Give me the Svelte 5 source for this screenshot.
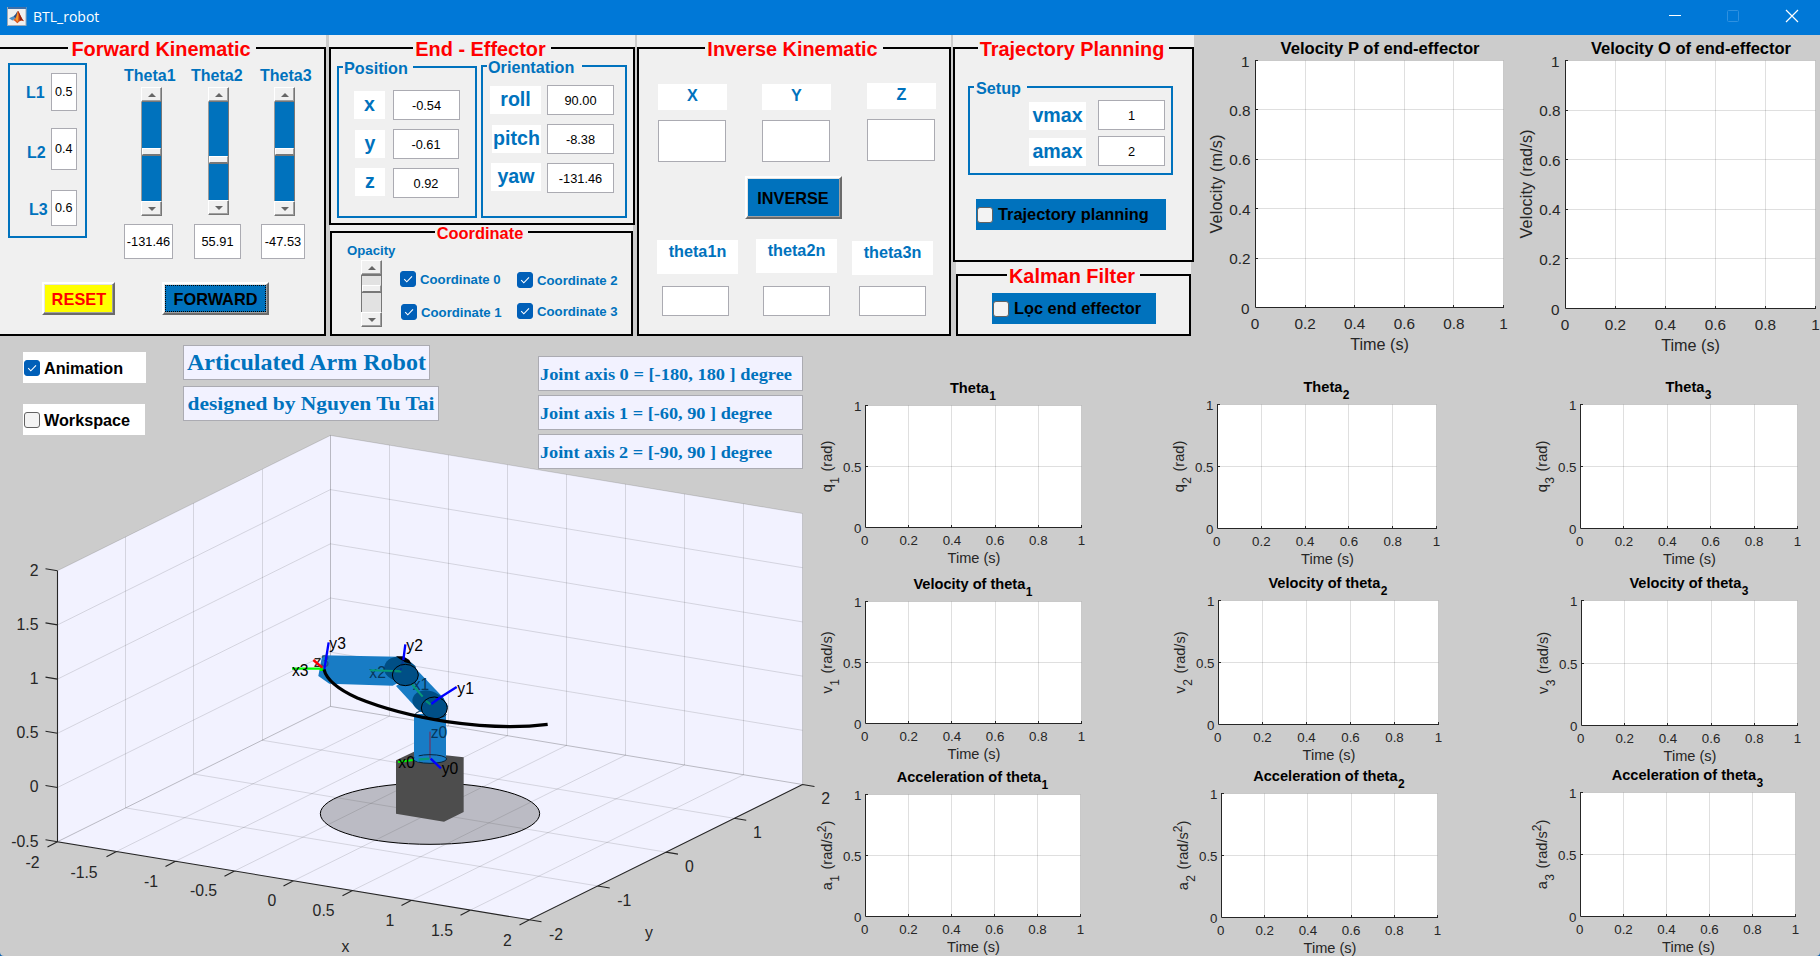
<script>
  const links = [
    { name: 'L1', value: '0.5', gap: 8, h: 38, indent: 16, drop: 1 },
    { name: 'L2', value: '0.4', gap: 17, h: 42, indent: 17, drop: 7 },
    { name: 'L3', value: '0.6', gap: 20, h: 36, indent: 19, drop: 4 }
  ];
  const thetas = [
    { name: 'Theta1', value: '-131.46', col: 67, h: 129, thumb: 46, indent: 6, w: 49, label: 7 },
    { name: 'Theta2', value: '55.91', col: 66, h: 128, thumb: 54, indent: 9, w: 47, label: 7 },
    { name: 'Theta3', value: '-47.53', col: 67, h: 129, thumb: 46, indent: 10, w: 44, label: 10 }
  ];
  const position = [
    { name: 'x', value: '-0.54', gap: 17, indent: 15, w: 31, drop: 1, iw: 67, space: 8 },
    { name: 'y', value: '-0.61', gap: 9, indent: 16, w: 30, drop: 1, iw: 66, space: 8 },
    { name: 'z', value: '0.92', gap: 9, indent: 16, w: 30, drop: 0, iw: 66, space: 8 }
  ];
  const orientation = [
    { name: 'roll', value: '90.00', gap: 14, indent: 7, w: 51, drop: 1, iw: 67, space: 6 },
    { name: 'pitch', value: '-8.38', gap: 9, indent: 9, w: 49, drop: 1, iw: 67, space: 6 },
    { name: 'yaw', value: '-131.46', gap: 9, indent: 8, w: 50, drop: 0, iw: 67, space: 6 }
  ];
  const limits = [
    { name: 'vmax', value: '1', gap: 5, indent: 59, w: 57, drop: 2, iw: 67, space: 12 },
    { name: 'amax', value: '2', gap: 6, indent: 59, w: 57, drop: 2, iw: 67, space: 12 }
  ];
  const targets = [
    { name: 'X', indent: 19, drop: 1 },
    { name: 'Y', indent: 35, drop: 1 },
    { name: 'Z', indent: 36, drop: 0 }
  ];
  const solutions = [
    { name: 'theta1n', indent: 18, drop: 1, shift: 5, gap: 12 },
    { name: 'theta2n', indent: 18, drop: 0, shift: 7, gap: 13 },
    { name: 'theta3n', indent: 15, drop: 2, shift: 7, gap: 11 }
  ];
  const joints = [
    { text: 'Joint axis 0 = [-180, 180 ] degree', w: 252 },
    { text: 'Joint axis 1 = [-60, 90 ] degree', w: 232 },
    { text: 'Joint axis 2 = [-90, 90 ] degree', w: 232 }
  ];

  const big = [
    { cell: [1194, 35, 316, 301], x0: 1255.5, x1: 1503.5, y0: 60.5, y1: 307.5, title: 'Velocity P of end-effector', tw: 199, ylab: 'Velocity (m/s)', yw: 99 },
    { cell: [1510, 35, 310, 301], x0: 1565.5, x1: 1815.5, y0: 60.5, y1: 308.5, title: 'Velocity O of end-effector', tw: 200, ylab: 'Velocity (rad/s)', yw: 109 }
  ];
  const small = [
    { cell: [815, 336, 355, 234], x0: 865.5, x1: 1081.5, y0: 405.5, y1: 527.5, title: 'Theta', n: 1, q: 'q', unit: 'rad' },
    { cell: [1170, 336, 360, 234], x0: 1217.5, x1: 1436.5, y0: 404.5, y1: 528.5, title: 'Theta', n: 2, q: 'q', unit: 'rad' },
    { cell: [1530, 336, 290, 234], x0: 1580.5, x1: 1797.5, y0: 404.5, y1: 528.5, title: 'Theta', n: 3, q: 'q', unit: 'rad' },
    { cell: [815, 570, 355, 196], x0: 865.5, x1: 1081.5, y0: 601.5, y1: 723.5, title: 'Velocity of theta', n: 1, q: 'v', unit: 'rad/s' },
    { cell: [1170, 570, 360, 196], x0: 1218.5, x1: 1438.5, y0: 600.5, y1: 724.5, title: 'Velocity of theta', n: 2, q: 'v', unit: 'rad/s' },
    { cell: [1530, 570, 290, 196], x0: 1581.5, x1: 1797.5, y0: 600.5, y1: 725.5, title: 'Velocity of theta', n: 3, q: 'v', unit: 'rad/s' },
    { cell: [815, 766, 355, 190], x0: 865.5, x1: 1080.5, y0: 794.5, y1: 916.5, title: 'Acceleration of theta', n: 1, q: 'a', unit: 'rad/s', pow: '2' },
    { cell: [1170, 766, 360, 190], x0: 1221.5, x1: 1437.5, y0: 793.5, y1: 917.5, title: 'Acceleration of theta', n: 2, q: 'a', unit: 'rad/s', pow: '2' },
    { cell: [1530, 766, 290, 190], x0: 1580.5, x1: 1795.5, y0: 792.5, y1: 916.5, title: 'Acceleration of theta', n: 3, q: 'a', unit: 'rad/s', pow: '2' }
  ];
  const fifths = [0, 0.2, 0.4, 0.6, 0.8, 1];
  const halves = [0, 0.5, 1];
  const snap = (v) => Math.floor(v) + 0.5;

  // Corners of the 3D axes box: left, back, right and front on the floor.
  const L = [57.5, 841.7], B = [330.4, 706.4], R = [802.5, 784.5], F = [529.5, 919.8];
  const H = 271;
  const mix = (a, b, t) => [a[0] + (b[0] - a[0]) * t, a[1] + (b[1] - a[1]) * t];
  const seg = (a, b) => `M${a[0]} ${a[1]}L${b[0]} ${b[1]}`;
  const up = (p, k) => [p[0], p[1] - H * k];
  const wall = [];
  for (let i = 1; i < 5; i++) wall.push(seg(up(L, i / 5), up(B, i / 5)), seg(up(B, i / 5), up(R, i / 5)));
  for (let i = 1; i < 4; i++) {
    const p = mix(L, B, i / 4);
    wall.push(seg([snap(p[0]), p[1]], [snap(p[0]), p[1] - H]), seg(p, mix(F, R, i / 4)));
  }
  for (let i = 1; i < 8; i++) {
    const p = mix(B, R, i / 8);
    wall.push(seg([snap(p[0]), p[1]], [snap(p[0]), p[1] - H]), seg(p, mix(L, F, i / 8)));
  }
  wall.push(seg(up(L, 1), up(B, 1)), seg(up(B, 1), up(R, 1)), seg(R, up(R, 1)));
  const ticks = [];
  for (let i = 0; i <= 8; i++) { const p = mix(L, F, i / 8); ticks.push(seg(p, [p[0] - 10, p[1] + 5.2])); }
  for (let i = 0; i <= 4; i++) { const p = mix(F, R, i / 4); ticks.push(seg(p, [p[0] + 12, p[1] + 2])); }
  for (let i = 0; i <= 5; i++) { const p = up(L, i / 5); ticks.push(seg(p, [p[0] - 12, p[1] - 2])); }
  const zLabels = ['-0.5', '0', '0.5', '1', '1.5', '2'];
  const floorLabels = [
    ['-2', 32.5, 867.5], ['-1.5', 84, 877.5], ['-1', 151, 887], ['-0.5', 203.5, 896], ['0', 271.8, 906],
    ['0.5', 323.6, 916], ['1', 390, 926], ['1.5', 442, 936], ['2', 507.5, 945.5], ['x', 345.4, 951.5],
    ['-2', 556, 940], ['-1', 624.3, 906.3], ['0', 689.5, 872], ['1', 757.5, 838], ['2', 825.6, 804], ['y', 649, 937.5]
  ];
</script>

{#snippet slider(h, thumb, tone)}
  <div class="slider {tone}" style="height:{h}px">
    <div class="arrow"><svg width="8" height="4" viewBox="0 0 8 4"><path d="M0 4L4 0L8 4Z" fill="#666" /></svg></div>
    <div class="track"><div class="thumb" style="margin-top:{thumb}px"></div></div>
    <div class="arrow"><svg width="8" height="4" viewBox="0 0 8 4"><path d="M0 0L4 4L8 0Z" fill="#666" /></svg></div>
  </div>
{/snippet}

{#snippet box(on)}
  <span class="cb" class:on>
    {#if on}<svg width="14" height="14" viewBox="0 0 14 14"><path d="M3.2 7.2L5.8 9.8L11 4.4" fill="none" stroke="#fff" stroke-width="1.1" /></svg>{/if}
  </span>
{/snippet}

{#snippet fields(rows)}
  {#each rows as r}
    <div class="field" style="margin-top:{r.gap}px">
      <span class="tag" style="margin-left:{r.indent}px;margin-top:{r.drop}px;width:{r.w}px">{r.name}</span>
      <input value={r.value} style="margin-left:{r.space}px;width:{r.iw}px" />
    </div>
  {/each}
{/snippet}

{#snippet plotArea(c, ysteps)}
  {@const w = c.x1 - c.x0}
  {@const h = c.y1 - c.y0}
  <rect x={c.x0} y={c.y0} width={w} height={h} fill="#fff" />
  {#each fifths.slice(1) as t}<path d="M{snap(c.x0 + w * t)} {c.y0}V{c.y1}" class="grid" />{/each}
  {#each ysteps.slice(1) as t}<path d="M{c.x0} {snap(c.y1 - h * t)}H{c.x1}" class="grid" />{/each}
  <path d="M{c.x0} {c.y0 - 0.5}V{c.y1}H{c.x1 + 0.5}" class="axis" />
  {#each fifths.slice(1) as t}<path d="M{snap(c.x0 + w * t)} {c.y1}v-2.5" class="axis" />{/each}
  {#each ysteps.slice(1) as t}<path d="M{c.x0} {snap(c.y1 - h * t)}h2.5" class="axis" />{/each}
{/snippet}

<div class="window">
  <header>
    <svg class="logo" width="20" height="20" viewBox="0 0 20 20">
      <rect x="0.5" y="0.5" width="18.5" height="18" fill="#efefef" stroke="#9aa7b5" />
      <rect x="1" y="0" width="18" height="2" fill="#3f6fa8" />
      <path d="M2 11.2L6.4 9.3L8.2 11.4L5.4 13.4Z" fill="#4a8fc7" />
      <path d="M6.4 9.3C8.3 8.6 9.3 5.4 10.8 4L9.8 10L8.2 11.4Z" fill="#274f86" />
      <path d="M5.4 13.4L8.2 11.4C9.4 10 9.7 6 10.8 4C12 3.8 13.6 10.5 17 14.2C14.5 12.8 13 13.3 10.6 16.2C9.6 16.6 8.4 13 5.4 13.4Z" fill="#d9541e" />
      <path d="M10.8 4C12 3.8 13.6 10.5 17 14.2C14.8 13 13.7 12.8 12.6 13.8C12.8 10 12 6 10.8 4Z" fill="#8f1f12" />
      <path d="M9.6 9.5C10.3 8 10.5 6 10.8 5C11.4 8 11.6 11 10.6 15C10 14 9.4 13 8.4 12.4Z" fill="#f39b2d" />
    </svg>
    <span class="caption">BTL_robot</span>
    <svg class="winbtns" width="140" height="35" viewBox="1665 0 140 35" fill="none">
      <path d="M1669 15.5H1681" stroke="#fff" />
      <rect x="1727.5" y="10.5" width="11" height="11" rx="1" stroke="#2f91e0" />
      <path d="M1786 10L1798 22M1798 10L1786 22" stroke="#fff" stroke-width="1.2" />
    </svg>
  </header>

  <section class="top">
    <div class="panel forward">
      <fieldset>
        <legend>Forward Kinematic</legend>
        <div class="row upper">
          <div class="lbox">
            {#each links as l}
              <div class="link" style="margin-top:{l.gap}px;height:{l.h}px">
                <span style="padding-left:{l.indent}px;padding-top:{l.drop}px">{l.name}</span>
                <input value={l.value} />
              </div>
            {/each}
          </div>
          <div class="thetas">
            {#each thetas as t}
              <div class="theta" style="width:{t.col}px">
                <span class="thlabel" style="margin-left:{t.label - 1}px">{t.name}</span>
                <div class="thslide">{@render slider(t.h, t.thumb, 'blue')}</div>
                <input value={t.value} style="margin-left:{t.indent}px;width:{t.w}px" />
              </div>
            {/each}
          </div>
        </div>
        <div class="row actions">
          <button class="reset">RESET</button>
          <button class="go focus">FORWARD</button>
        </div>
      </fieldset>
    </div>

    <div class="col second">
      <div class="panel effector">
        <fieldset>
          <legend>End - Effector</legend>
          <div class="row">
            <fieldset class="sub pos"><legend>Position</legend>{@render fields(position)}</fieldset>
            <fieldset class="sub ori"><legend>Orientation</legend>{@render fields(orientation)}</fieldset>
          </div>
        </fieldset>
      </div>
      <div class="panel coord">
        <fieldset>
          <legend>Coordinate</legend>
          <div class="row">
            <div class="opacity">
              <span>Opacity</span>
              {@render slider(67, 9, 'plain')}
            </div>
            <div class="checks a">
              <label>{@render box(true)}Coordinate 0</label>
              <label>{@render box(true)}Coordinate 1</label>
            </div>
            <div class="checks b">
              <label>{@render box(true)}Coordinate 2</label>
              <label>{@render box(true)}Coordinate 3</label>
            </div>
          </div>
        </fieldset>
      </div>
    </div>

    <div class="panel inverse">
      <fieldset>
        <legend>Inverse Kinematic</legend>
        <div class="row targets">
          {#each targets as t}
            <div class="target" style="margin-left:{t.indent}px;padding-top:{t.drop}px">
              <span class="tag16">{t.name}</span>
              <input />
            </div>
          {/each}
        </div>
        <button class="go inv">INVERSE</button>
        <div class="row solutions">
          {#each solutions as s}
            <div class="solution" style="margin-left:{s.indent}px;padding-top:{s.drop}px">
              <span class="tag16">{s.name}</span>
              <input style="margin-left:{s.shift}px;margin-top:{s.gap}px" />
            </div>
          {/each}
        </div>
      </fieldset>
    </div>

    <div class="col third">
      <div class="panel traj">
        <fieldset>
          <legend>Trajectory Planning</legend>
          <fieldset class="sub setup"><legend>Setup</legend>{@render fields(limits)}</fieldset>
          <label class="strip plan">{@render box(false)}Trajectory planning</label>
        </fieldset>
      </div>
      <div class="panel kalman">
        <fieldset>
          <legend>Kalman Filter</legend>
          <label class="strip filter">{@render box(false)}Lọc end effector</label>
        </fieldset>
      </div>
    </div>

    {#each big as c}
      {@const w = c.x1 - c.x0}
      {@const h = c.y1 - c.y0}
      {@const mid = c.x0 + w / 2}
      <svg class="plot" width={c.cell[2]} height={c.cell[3]} viewBox={c.cell.join(' ')}>
        {@render plotArea(c, fifths)}
        <text x={mid + 0.5} y="54.3" class="title" font-size="16" textLength={c.tw} lengthAdjust="spacingAndGlyphs">{c.title}</text>
        {#each fifths as t}
          <text x={c.x0 + w * t - (t === 0 ? 0.5 : 0)} y={c.y1 + 21.7} class="mid" font-size="15.3">{t}</text>
          <text x={c.x0 - (t === 0 || t === 1 ? 6 : 5)} y={c.y1 - h * t + 6} class="end" font-size="15.3">{t}</text>
        {/each}
        <text x={mid} y={c.y1 + 42.7} class="mid" font-size="16.2">Time (s)</text>
        <text transform="translate({c.x0 - 33.7} 184) rotate(-90)" class="mid" font-size="16.2" textLength={c.yw}>{c.ylab}</text>
      </svg>
    {/each}
  </section>

  <section class="bottom">
    <div class="scene">
      <div class="row heading">
        <div class="col toggles">
          <label class="white w1">{@render box(true)}Animation</label>
          <label class="white w2">{@render box(false)}Workspace</label>
        </div>
        <div class="col names">
          <div class="note n1"><svg width="245" height="33"><text x="3" y="24.3" font-size="22.5" textLength="239" lengthAdjust="spacingAndGlyphs">Articulated Arm Robot</text></svg></div>
          <div class="note n2"><svg width="254" height="33"><text x="3.5" y="23" font-size="19" textLength="247" lengthAdjust="spacingAndGlyphs">designed by Nguyen Tu Tai</text></svg></div>
        </div>
        <div class="col joints">
          {#each joints as j}
            <div class="note"><svg width="263" height="33"><text x="1" y="23.3" font-size="16.4" textLength={j.w} lengthAdjust="spacingAndGlyphs">{j.text}</text></svg></div>
          {/each}
        </div>
      </div>

      <svg class="axes3d" width="815" height="526" viewBox="0 430 815 526">
        <path d="M{L}L{up(L, 1)}L{up(B, 1)}L{up(R, 1)}L{R}L{F}Z" fill="#f2f2ff" />
        <path d={wall.join('')} fill="none" stroke="#262626" stroke-opacity="0.15" />
        <path d="{seg(L, B)}{seg(B, R)}M330.5 706.4V435.4" fill="none" stroke="#262626" stroke-opacity="0.28" />
        <path d="M{up(L, 1)}L{L}L{F}L{R}{ticks.join('')}" fill="none" stroke="#262626" stroke-width="1.1" />
        {#each zLabels as z, i}<text x="38.5" y={846.5 - i * 54.2} class="end" font-size="15.8">{z}</text>{/each}
        {#each floorLabels as [t, x, y]}<text {x} {y} class="mid" font-size="15.8">{t}</text>{/each}

        <g transform="translate(270 600) scale(0.33333)">
          <ellipse cx="480" cy="641" rx="329" ry="92" fill="#4d4d4d" fill-opacity="0.33" stroke="#000" stroke-width="3" />
          <path d="M378 481L432 455L581 472V636L522 665L378 641Z" fill="#4d4d4d" />
          <path d="M432 342H528V477A48 13 0 0 1 432 477Z" fill="#187cc5" />
          <g class="hidden">
            <text x="482" y="415">z0</text>
          </g>
          <path d="M480 395V476" stroke="#4c5088" stroke-width="6" />
          <path d="M430 480L478 476" stroke="#079a78" stroke-width="7" />
          <ellipse cx="480" cy="477" rx="50" ry="13" fill="none" stroke="#04243c" stroke-width="3" />
          <ellipse cx="482" cy="343" rx="46" ry="13" fill="none" stroke="#04243c" stroke-width="3" />
          <path d="M157 166L384 170L446 215L368 257L178 251L145 228L152 190Z" fill="#187cc5" />
          <path d="M446 215L520 293L535 320L450 336L378 258Z" fill="#187cc5" />
          <path d="M342 204C345 182 362 171 382 170C402 171 420 183 436 198L444 222L372 240C352 232 342 220 342 204Z" fill="#004f86" />
          <path d="M427 300C430 282 446 271 468 271C485 271 505 282 520 294L530 320L458 336C438 328 427 316 427 300Z" fill="#004f86" />
          <path d="M378 169H400L418 180L424 192L405 187L388 176Z" fill="#000" />
          <g class="hidden">
            <text x="298" y="233">x2</text>
            <text x="428" y="270">x1</text>
          </g>
          <path d="M300 211L394 214M425 252L458 290" stroke="#079a78" stroke-width="6" />
          <path d="M399 182L392 211" stroke="#05358f" stroke-width="6" />
          <ellipse cx="406" cy="225" rx="39" ry="32" fill="#004f86" stroke="#000" stroke-width="3" />
          <ellipse cx="493" cy="324" rx="39" ry="33" fill="#004f86" stroke="#000" stroke-width="3" />
          <path d="M374 213L394 214M468 303L482 313" stroke="#058d72" stroke-width="7" />
          <path d="M393 204L392 212" stroke="#05358f" stroke-width="5" />
          <text x="131" y="200" fill="#111">z</text><text x="152" y="200" fill="#0b3f6b" fill-opacity="0.45">3</text>
          <path d="M384 486L430 480M66 206H160" stroke="#0f0" stroke-width="6.5" />
          <path d="M150 208H162" stroke="#0f0" stroke-width="10" />
          <path d="M130 180L157 203" stroke="#f00" stroke-width="7.5" />
          <path d="M163 208L176 127M406 133L400 180M484 312L508 294M508 294L560 261M482 476L513 505" stroke="#00f" stroke-width="7" fill="none" />
          <path d="M162 208C170 242 205 268 262 294C345 328 430 349 530 365C640 381 740 385 833 373" fill="none" stroke="#000" stroke-width="9.5" />
          <g class="tips">
            <text x="178" y="146">y3</text>
            <text x="409" y="152">y2</text>
            <text x="562" y="282">y1</text>
            <text x="515" y="523">y0</text>
            <text x="66" y="228">x3</text>
            <text x="385" y="505">x0</text>
          </g>
          <path d="M433 462V480L446 487V462Z" fill="#187cc5" />
        </g>
      </svg>
    </div>

    <div class="plots">
      {#each small as c}
        {@const w = c.x1 - c.x0}
        {@const h = c.y1 - c.y0}
        {@const mid = c.x0 + w / 2}
        <svg class="plot" width={c.cell[2]} height={c.cell[3]} viewBox={c.cell.join(' ')}>
          {@render plotArea(c, halves)}
          <text x={mid - 0.5} y={c.y0 - 12.5} class="title" font-size="14.6">{c.title}<tspan dy="7" dx="0.5" font-size="12">{c.n}</tspan></text>
          {#each fifths as t}<text x={c.x0 + w * t - (t === 0 ? 0.7 : 0)} y={c.y1 + 17.2} class="mid" font-size="13.3">{t}</text>{/each}
          {#each halves as t}<text x={c.x0 - 4} y={c.y1 - h * t + 5.7} class="end" font-size="13.3">{t}</text>{/each}
          <text x={mid + 0.5} y={c.y1 + 35.7} class="mid" font-size="14.6">Time (s)</text>
          <text transform="translate({c.x0 - 33.5} {(c.y0 + c.y1) / 2}) rotate(-90)" class="mid" font-size="14.6">{c.q}<tspan dy="6.5" dx="0.5" font-size="12">{c.n}</tspan><tspan dy="-6.5" dx="5.5">({c.unit}</tspan>{#if c.pow}<tspan dy="-6" font-size="12">{c.pow}</tspan><tspan dy="6">)</tspan>{:else}<tspan>)</tspan>{/if}</text>
        </svg>
      {/each}
    </div>
  </section>
</div>

<style>
  :global(body) { margin: 0; background: #0b62b0; overflow: hidden; }
  :global(*) { box-sizing: border-box; }
  .window { width: 1820px; height: 956px; background: #ccc; overflow: hidden; display: flex; flex-direction: column; border-radius: 0 0 4px 4px; font-family: "Liberation Sans", Arial, sans-serif; }
  header { height: 35px; background: #0078d7; display: flex; align-items: flex-start; }
  .logo { margin: 7px 6px 0 7px; }
  .caption { color: #fff; font: 14px/34px "Open Sans", "Noto Sans", sans-serif; }
  .winbtns { margin-left: auto; margin-right: 15px; }

  .row { display: flex; align-items: flex-start; }
  .col { display: flex; flex-direction: column; align-items: flex-start; }
  .top { display: flex; align-items: flex-start; height: 301px; }
  .panel { background: #f0f0f0; flex: none; }
  fieldset { margin: 0; padding: 0; min-width: 0; border: 2px solid #000; height: 100%; }
  legend { margin: 0 auto; padding: 0 5px 0 2px; height: 26px; line-height: 28px; color: #f00; font-size: 19.9px; font-weight: bold; white-space: nowrap; }
  .forward legend { padding-left: 3px; }
  .sub { border-color: #0072bd; flex: none; }
  .panel .sub legend { color: #0072bd; font-size: 16.2px; margin: 0 0 0 4px; padding: 0 0 0 1px; }

  input { display: block; margin: 0; padding: 0; border: 1px solid #ababb2; border-radius: 0; background: #fff; color: #000; text-align: center; font: 12.8px "Liberation Sans", Arial, sans-serif; height: 30px; outline: 0; flex: none; }
  button { padding: 1px 0 0; font: bold 16.3px "Liberation Sans", Arial, sans-serif; border: 2px solid; border-color: #fff #6b6b6b #6b6b6b #fff; box-shadow: inset -1px -1px #a0a0a0, inset 1px 1px #e3e3e3; border-radius: 0; white-space: nowrap; }

  .forward { width: 326px; height: 301px; }
  .forward fieldset { border-left: 0; }
  .upper { height: 198px; }
  .lbox { width: 79px; height: 175px; margin: 2px 0 0 8px; border: 2px solid #0072bd; }
  .link { display: flex; align-items: center; }
  .link span { width: 41px; color: #0072bd; font-weight: bold; font-size: 16px; }
  .link input { width: 26px; height: 100%; text-align: left; padding-left: 3px; font-size: 12.6px; }
  .thetas { display: flex; margin-left: 31px; }
  .thlabel { display: block; height: 26px; line-height: 30px; font-size: 16px; font-weight: bold; color: #0072bd; }
  .thslide { height: 129px; margin-left: 23px; }
  .theta input { margin-top: 8px; height: 35px; }
  .actions { margin-top: 23px; }
  .reset { width: 73px; height: 33px; margin-left: 42px; padding-left: 1px; background: #ff0; color: #f00; letter-spacing: 0.1px; }
  .go { background: #0072bd; color: #000; }
  .focus { width: 107px; height: 33px; margin-left: 47px; outline: 1px dotted #000; outline-offset: -4px; }

  .slider { width: 21px; display: flex; flex-direction: column; }
  .arrow { height: 15px; background: #f0f0f0; border: 1px solid; border-color: #fff #777 #777 #fff; box-shadow: inset -1px -1px #a0a0a0; display: flex; align-items: center; justify-content: center; }
  .track { flex: 1; border-right: 1px solid #777; border-left: 1px solid #9b9b9b; overflow: hidden; }
  .blue .track { background: #0072bd; }
  .plain .track { background: #e2e2e2; border-top: 1px solid #777; border-left-color: #777; }
  .thumb { height: 7px; background: #f0f0f0; border: 1px solid; border-color: #fff #999 #777 #fff; box-shadow: 0 1px #777; }

  .second { margin-left: 3px; width: 306px; flex: none; }
  .effector { width: 306px; height: 190px; }
  .pos { width: 140px; height: 157px; margin-left: 6px; }
  .panel .pos legend { height: 12px; line-height: 15px; width: 70px; }
  .ori { width: 146px; height: 157px; margin-left: 4px; }
  .panel .ori legend { height: 10px; line-height: 13px; width: 95px; }
  .field { display: flex; align-items: flex-start; height: 30px; }
  .tag { height: 28px; line-height: 26px; background: #fff; color: #0072bd; font-weight: bold; font-size: 19.6px; text-align: center; flex: none; white-space: nowrap; }

  .coord { width: 303px; height: 111px; margin-left: 1px; }
  .coord legend { height: 14px; line-height: 16px; font-size: 16.4px; }
  .opacity { width: 53px; margin-left: 15px; font-size: 13.2px; font-weight: bold; color: #0072bd; }
  .opacity span { display: block; height: 21px; line-height: 23px; }
  .opacity .slider, .opacity :global(.slider) { margin-left: 14px; }
  .checks { display: flex; flex-direction: column; }
  .checks label { display: flex; align-items: center; height: 16px; font-size: 13.2px; font-weight: bold; color: #0072bd; white-space: nowrap; }
  .checks .cb { margin-right: 4px; }
  .a { width: 117px; padding-top: 32px; }
  .a label + label { margin: 17px 0 0 1px; }
  .b { padding-top: 33px; }
  .b label + label { margin-top: 15px; }
  .cb { width: 16px; height: 16px; border: 1px solid #626262; border-radius: 3px; background: #f3f3f3; display: flex; align-items: center; justify-content: center; flex: none; }
  .cb.on { background: #005fb8; border-color: #005fb8; }

  .inverse { width: 314px; height: 301px; margin-left: 2px; }
  .tag16 { display: block; background: #fff; color: #0072bd; font-weight: bold; font-size: 16.2px; line-height: 23px; text-align: center; }
  .targets { margin-top: 22px; height: 79px; }
  .target .tag16 { width: 69px; height: 26px; }
  .target input { width: 68px; height: 42px; margin-top: 10px; }
  .inv { display: block; width: 97px; height: 43px; margin: 14px 0 0 106px; padding-right: 1px; }
  .solutions { margin-top: 20px; }
  .solution .tag16 { width: 81px; height: 34px; }
  .solution input { width: 67px; }

  .third { margin-left: 2px; width: 241px; flex: none; }
  .traj { width: 241px; height: 227px; }
  .setup { width: 205px; height: 96px; margin: 18px 0 0 13px; }
  .panel .setup legend { height: 16px; line-height: 19px; width: 53px; padding-left: 2px; }
  .strip { display: flex; align-items: center; height: 31px; background: #0072bd; font-weight: bold; font-size: 16.35px; line-height: 33px; padding-left: 1px; white-space: nowrap; }
  .strip .cb { margin-right: 5px; }
  .plan { width: 190px; margin: 24px 0 0 21px; }
  .kalman { width: 235px; height: 74px; margin-left: 3px; }
  .filter { width: 164px; margin: 5px 0 0 34px; }

  .plot { display: block; flex: none; overflow: visible; }
  .plot .grid { stroke: #262626; stroke-opacity: 0.15; fill: none; }
  .plot .axis { stroke: #262626; fill: none; }
  text { fill: #262626; }
  .mid { text-anchor: middle; }
  .end { text-anchor: end; }
  .title { text-anchor: middle; font-weight: bold; fill: #000; }

  .bottom { display: flex; height: 620px; }
  .scene { width: 815px; flex: none; }
  .heading { height: 133px; position: relative; z-index: 1; }
  .toggles { margin: 16px 0 0 23px; }
  .white { display: flex; align-items: center; height: 31px; padding-left: 1px; background: #fff; color: #000; font-weight: bold; font-size: 16.2px; line-height: 34px; }
  .white .cb { margin-right: 4px; }
  .w1 { width: 123px; }
  .w2 { width: 122px; margin-top: 21px; }
  .names { margin: 9px 0 0 37px; gap: 6px; width: 256px; }
  .note { border: 1px solid #ababb2; background: #f2f2ff; height: 35px; }
  .note svg { display: block; }
  .note text { fill: #0072bd; font-family: "Liberation Serif", serif; font-weight: bold; }
  .joints { margin: 20px 0 0 99px; gap: 4px; }
  .axes3d { display: block; margin-top: -39px; overflow: visible; }
  .axes3d g text { font-size: 47px; }
  .hidden text { fill: #06375b; }
  .tips text { fill: #000; }
  .plots { display: grid; grid-template-columns: 355px 360px 290px; grid-template-rows: 234px 196px 190px; }
</style>
